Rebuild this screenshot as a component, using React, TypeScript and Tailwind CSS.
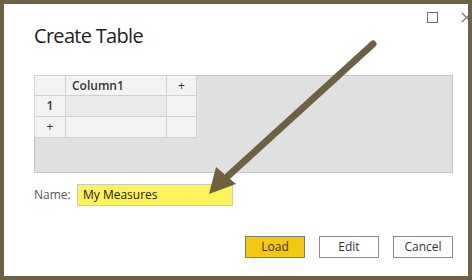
import React from 'react';

const font = { fontFamily: '"Open Sans", "Noto Sans", sans-serif' };

export default function App() {
    return (
        <div className="w-[472px] h-[280px] border-4 border-[#6c6142] bg-white relative overflow-hidden" style={font}>
            {/* window controls */}
            <div className="flex justify-end items-start h-[18px] pt-[8px]">
                <div className="w-[11px] h-[11px] shrink-0 border border-[#6e6e6e] mr-[23px]" />
                <svg width="11" height="11" viewBox="0 0 11 11" className="-mr-[4px] shrink-0">
                    <path d="M1 1 L10 10 M10 1 L1 10" stroke="#6e6e6e" strokeWidth="1.2" fill="none" />
                </svg>
            </div>

            <div className="px-[30px]">
                <h1 className="text-[20px] leading-[28px] font-medium text-[#222] tracking-[-0.7px]">Create Table</h1>

                {/* data grid */}
                <div className="mt-[25px] h-[98px] w-[419px] bg-[#e0e0e0] border border-[#c6c6c6]">
                    <table className="border-collapse text-[12px] text-[#333] -mt-px -ml-px">
                        <tbody>
                            <tr className="h-[20px] bg-[#f3f3f3]">
                                <td className="w-[31px] border border-[#d2d2d2]" />
                                <td className="w-[101px] border border-[#d2d2d2] pl-[6px] font-semibold">Column1</td>
                                <td className="w-[30px] border border-[#d2d2d2] text-center">+</td>
                            </tr>
                            <tr className="h-[21px]">
                                <td className="border border-[#d2d2d2] bg-[#f3f3f3] text-center font-semibold">1</td>
                                <td className="border border-[#d2d2d2] bg-[#e9e9e9]" />
                                <td className="border border-[#d2d2d2] bg-[#f3f3f3]" />
                            </tr>
                            <tr className="h-[21px] bg-[#f3f3f3]">
                                <td className="border border-[#d2d2d2] text-center">+</td>
                                <td className="border border-[#d2d2d2]" />
                                <td className="border border-[#d2d2d2]" />
                            </tr>
                        </tbody>
                    </table>
                </div>

                {/* name */}
                <div className="flex items-center mt-[11px]">
                    <span className="text-[12px] text-[#555] w-[43px]">Name:</span>
                    <div className="w-[156px] h-[22px] bg-[#fff35c] border border-[#c8c8c8] flex items-center pl-[5px] text-[12px] text-[#222]">
                        My Measures
                    </div>
                </div>

                {/* buttons */}
                <div className="flex justify-end gap-[14px] mt-[30px] -mr-[15px]">
                    <button className="w-[60px] h-[22px] bg-[#f2c811] border border-[#7a7a7a] text-[12px] text-[#333]">Load</button>
                    <button className="w-[60px] h-[22px] bg-white border border-[#8a8a8a] text-[12px] text-[#333]">Edit</button>
                    <button className="w-[60px] h-[22px] bg-white border border-[#8a8a8a] text-[12px] text-[#333]">Cancel</button>
                </div>
            </div>

            {/* annotation arrow */}
            <svg className="absolute left-[-4px] top-[-4px] pointer-events-none" width="472" height="280" viewBox="0 0 472 280">
                <line x1="373" y1="44" x2="228" y2="176" stroke="#6c6142" strokeWidth="7" strokeLinecap="round" />
                <polygon points="209,194 216,167 236,184" fill="#6c6142" />
            </svg>
        </div>
    );
}
